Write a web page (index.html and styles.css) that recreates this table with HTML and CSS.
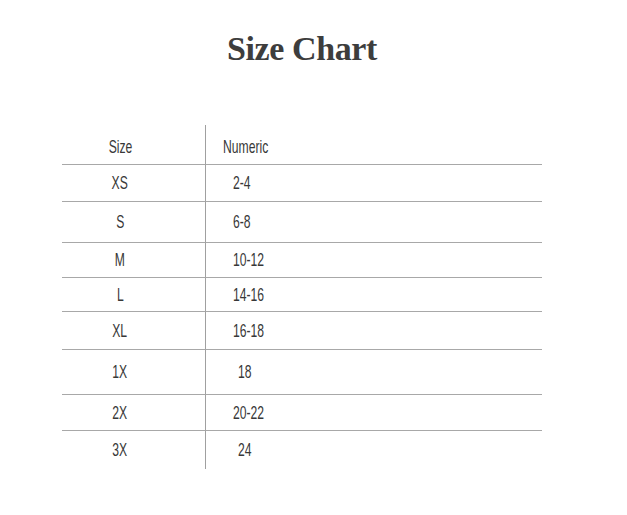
FILE: index.html
```html
<!DOCTYPE html>
<html>
<head>
<meta charset="utf-8">
<link rel="stylesheet" href="styles.css">
</head>
<body>
<div class="wrap">
  <h1 class="title">Size Chart</h1>
  <div class="chart">
    <div class="c1 head"><span class="t">Size</span></div>
    <div class="c2 head num-head"><span class="t">Numeric</span></div>

    <div class="c1 r"><span class="t">XS</span></div>
    <div class="c2 r"><span class="t">2-4</span></div>

    <div class="c1 r"><span class="t">S</span></div>
    <div class="c2 r"><span class="t">6-8</span></div>

    <div class="c1 r"><span class="t">M</span></div>
    <div class="c2 r"><span class="t">10-12</span></div>

    <div class="c1 r"><span class="t">L</span></div>
    <div class="c2 r"><span class="t">14-16</span></div>

    <div class="c1 r"><span class="t">XL</span></div>
    <div class="c2 r"><span class="t">16-18</span></div>

    <div class="c1 r"><span class="t">1X</span></div>
    <div class="c2 r short"><span class="t">18</span></div>

    <div class="c1 r"><span class="t">2X</span></div>
    <div class="c2 r"><span class="t">20-22</span></div>

    <div class="c1 r"><span class="t">3X</span></div>
    <div class="c2 r short"><span class="t">24</span></div>
  </div>
</div>
</body>
</html>
```
FILE: styles.css
```css
html, body {
  margin: 0;
  padding: 0;
  background: #ffffff;
}

.wrap {
  width: 480px;
  margin-left: 62px;
  padding-top: 29px;
}

.title {
  margin: 0;
  font-family: "Liberation Serif", "DejaVu Serif", serif;
  font-weight: bold;
  font-size: 34px;
  line-height: 40px;
  letter-spacing: -0.4px;
  color: #3d3d3d;
  text-align: center;
}

.chart {
  margin-top: 56px;
  display: grid;
  grid-template-columns: 143px 337px;
  grid-template-rows: 39px 37px 41px 35px 34px 38px 45px 36px 39px;
  font-family: "Liberation Sans", "DejaVu Sans", sans-serif;
  font-size: 19px;
  color: #383838;
}

.chart > div {
  display: flex;
  align-items: center;
  box-sizing: border-box;
}

.c1 {
  justify-content: center;
  padding-right: 27px;
}

.c2 {
  border-left: 1px solid #a0a0a0;
  padding-left: 27px;
}

.c2 .t {
  transform-origin: left center;
}

.c2.short {
  padding-left: 32px;
}

.c2.num-head {
  padding-left: 17px;
}

.r {
  border-top: 1px solid #a8a8a8;
}

.head {
  padding-top: 5px;
}

.t {
  display: inline-block;
  transform: scaleX(0.64);
  line-height: 20px;
}
```
